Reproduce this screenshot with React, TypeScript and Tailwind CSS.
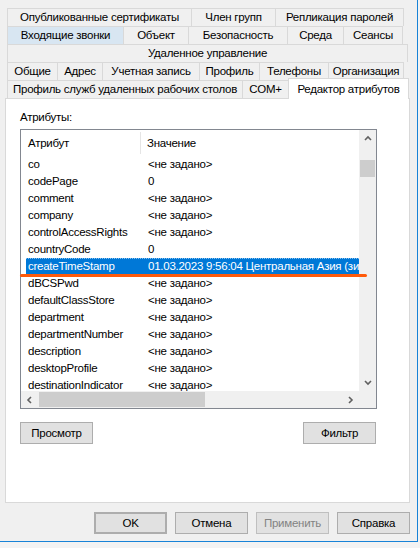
import clsx from 'clsx'

const rows: [string, string][] = [
  ['co', '<не задано>'],
  ['codePage', '0'],
  ['comment', '<не задано>'],
  ['company', '<не задано>'],
  ['controlAccessRights', '<не задано>'],
  ['countryCode', '0'],
  ['createTimeStamp', '01.03.2023 9:56:04 Центральная Азия (зима)'],
  ['dBCSPwd', '<не задано>'],
  ['defaultClassStore', '<не задано>'],
  ['department', '<не задано>'],
  ['departmentNumber', '<не задано>'],
  ['description', '<не задано>'],
  ['desktopProfile', '<не задано>'],
  ['destinationIndicator', '<не задано>'],
]

function Tab({ w, label, last, hover }: { w: string; label: string; last?: boolean; hover?: boolean }) {
  return (
    <div
      className={clsx(
        'h-[18px] shrink-0 flex items-center justify-center border-t border-l border-[#d9d9d9] whitespace-nowrap',
        w,
        last && 'border-r',
        hover && 'bg-[#d8e6f2]'
      )}
    >
      {label}
    </div>
  )
}

function Chevron({ dir }: { dir: 'up' | 'down' | 'left' | 'right' }) {
  const pts = {
    up: '1,5 4,2 7,5',
    down: '1,2 4,5 7,2',
    left: '5,1 2,4 5,7',
    right: '2,1 5,4 2,7',
  }[dir]
  return (
    <svg width="8" height="8" viewBox="0 0 8 8">
      <polyline points={pts} fill="none" stroke="#606060" strokeWidth="1.6" />
    </svg>
  )
}

function Btn({ label, className }: { label: string; className?: string }) {
  return (
    <div
      className={clsx(
        'w-[73px] h-[22px] flex items-center justify-center border border-[#adadad] bg-[#e1e1e1]',
        className
      )}
    >
      {label}
    </div>
  )
}

export default function App() {
  return (
    <div className="w-[420px] h-[548px] bg-[#f3f3f3] text-[11.5px] leading-[15px] tracking-[-0.25px] text-black font-['Liberation_Sans',Arial,sans-serif]">
      <div className="relative w-[418px] h-[542px] bg-[#f0f0f0] border-r border-b border-[#1883d7] pt-[8px]">
        {/* tabs */}
        <div className="ml-[7px] flex flex-col">
          <div className="flex">
            <Tab w="w-[184px]" label="Опубликованные сертификаты" />
            <Tab w="w-[84px]" label="Член групп" />
            <Tab w="w-[129px]" label="Репликация паролей" last />
          </div>
          <div className="flex">
            <Tab w="w-[116px]" label="Входящие звонки" hover />
            <Tab w="w-[65px]" label="Объект" />
            <Tab w="w-[99px]" label="Безопасность" />
            <Tab w="w-[56px]" label="Среда" />
            <Tab w="w-[60px]" label="Сеансы" last />
          </div>
          <div className="flex">
            <Tab w="w-[401px]" label="Удаленное управление" last />
          </div>
          <div className="flex">
            <Tab w="w-[50px]" label="Общие" />
            <Tab w="w-[45px]" label="Адрес" />
            <Tab w="w-[97px]" label="Учетная запись" />
            <Tab w="w-[60px]" label="Профиль" />
            <Tab w="w-[69px]" label="Телефоны" />
            <Tab w="w-[76px]" label="Организация" last />
          </div>
          <div className="flex h-[18px] items-end">
            <Tab w="w-[235px]" label="Профиль служб удаленных рабочих столов" />
            <Tab w="w-[46px]" label="COM+" />
            <div className="relative z-10 -mb-px h-[21px] w-[121px] shrink-0 flex items-center justify-center bg-white border-t border-l border-r border-[#d9d9d9] whitespace-nowrap">
              Редактор атрибутов
            </div>
          </div>
        </div>

        {/* panel */}
        <div className="ml-[5px] w-[405px] h-[405px] border border-[#d9d9d9] bg-white pl-[14px] pt-[11px]">
          <div>Атрибуты:</div>
          <div className="mt-[4px] w-[357px] h-[280px] border border-[#828790] flex flex-col">
            <div className="flex h-[261px]">
              <div className="w-[338px] overflow-hidden">
                <div className="h-[26px] flex items-center">
                  <div className="w-[120px] h-[22px] pl-[7px] flex items-center border-r border-[#e5e5e5]">Атрибут</div>
                  <div className="pl-[6px]">Значение</div>
                </div>
                {rows.map(([a, v], i) => (
                  <div
                    key={a}
                    className={clsx(
                      'ml-[5px] h-[17px] flex items-center whitespace-nowrap',
                      i === 6 && 'bg-[#0078d7] text-white border-y border-dotted border-[#8cc2ee]'
                    )}
                  >
                    <div className="w-[115px] shrink-0 pl-[2px]">{a}</div>
                    <div className="pl-[7px]">{v}</div>
                  </div>
                ))}
              </div>
              <div className="w-[17px] bg-[#f0f0f0] flex flex-col">
                <div className="h-[17px] flex items-center justify-center">
                  <Chevron dir="up" />
                </div>
                <div className="mt-[13px] ml-px w-[15px] h-[17px] bg-[#cdcdcd]" />
                <div className="mt-auto h-[17px] flex items-center justify-center">
                  <Chevron dir="down" />
                </div>
              </div>
            </div>
            <div className="flex h-[17px]">
              <div className="w-[338px] bg-[#f0f0f0] flex items-center">
                <div className="w-[17px] h-[17px] flex items-center justify-center">
                  <Chevron dir="left" />
                </div>
                <div className="ml-px w-[166px] h-[15px] bg-[#cdcdcd]" />
                <div className="ml-auto w-[17px] h-[17px] flex items-center justify-center">
                  <Chevron dir="right" />
                </div>
              </div>
              <div className="w-[17px] bg-[#f0f0f0]" />
            </div>
          </div>
          <div className="mt-[13px] w-[356px] flex justify-between">
            <Btn label="Просмотр" />
            <Btn label="Фильтр" />
          </div>
        </div>

        {/* dialog buttons */}
        <div className="mt-[9px] ml-[94px] flex gap-[8px]">
          <Btn label="OK" className="border-2 border-[#0078d7]" />
          <Btn label="Отмена" />
          <Btn label="Применить" className="bg-[#cccccc] border-[#bfbfbf] text-[#838383]" />
          <Btn label="Справка" />
        </div>

        {/* orange annotation marks */}
        <div className="absolute left-[295px] top-[96px] w-[107px] h-[2px] rounded-full bg-[#ff5a0a]" />
        <div className="absolute left-[20px] top-[274px] w-[347px] h-[3px] rounded-full bg-[#ff5a0a]" />
      </div>
    </div>
  )
}
